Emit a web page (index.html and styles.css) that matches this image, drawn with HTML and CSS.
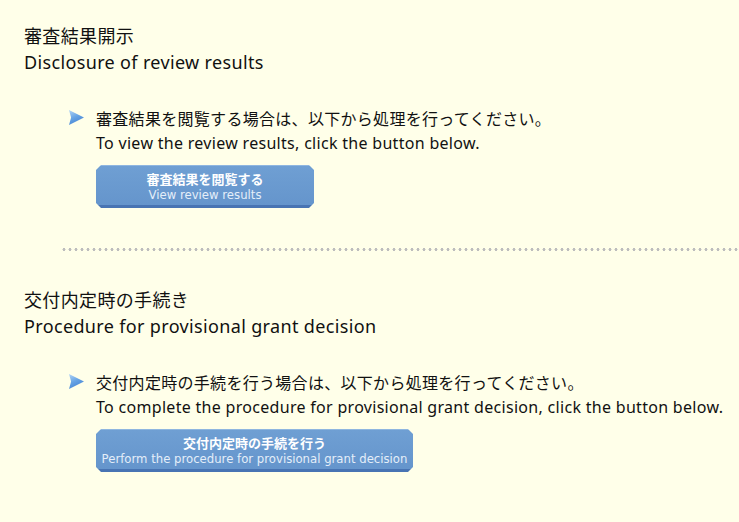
FILE: index.html
```html
<!DOCTYPE html>
<html lang="ja">
<head>
  <meta charset="UTF-8">
  <meta name="viewport" content="width=device-width,initial-scale=1.0">
  <title>審査結果開示</title>
  <link rel="stylesheet" href="styles.css">
</head>
<body>
  <section class="block">
    <h2 class="block-title">審査結果開示<br>Disclosure of review results</h2>
    <div class="guide">
      <p class="guide-text">審査結果を閲覧する場合は、以下から処理を行ってください。<br>To view the review results, click the button below.</p>
      <a class="btn btn-view" href="#">
        <span class="btn-ja">審査結果を閲覧する</span>
        <span class="btn-en">View review results</span>
      </a>
    </div>
  </section>

  <hr class="dots">

  <section class="block">
    <h2 class="block-title">交付内定時の手続き<br>Procedure for provisional grant decision</h2>
    <div class="guide">
      <p class="guide-text">交付内定時の手続を行う場合は、以下から処理を行ってください。<br>To complete the procedure for provisional grant decision, click the button below.</p>
      <a class="btn btn-grant" href="#">
        <span class="btn-ja">交付内定時の手続を行う</span>
        <span class="btn-en">Perform the procedure for provisional grant decision</span>
      </a>
    </div>
  </section>
</body>
</html>
```

FILE: styles.css
```css
body {
  margin: 0;
  background: #ffffe9;
  color: #111;
  font-family: "Noto Sans", "Noto Sans CJK JP", sans-serif;
}

.block {
  padding: 23px 0 0 24px;
}

.block-title {
  margin: 0;
  font-size: 18px;
  font-weight: normal;
  line-height: 26px;
  letter-spacing: 0.35px;
}

.guide {
  position: relative;
  margin: 32px 0 0 72px;
}

.guide::before {
  content: "";
  position: absolute;
  left: -27px;
  top: 3px;
  width: 15px;
  height: 15px;
  background: linear-gradient(155deg, #b4d6f6 0%, #66a3e4 45%, #3a78cc 100%);
  clip-path: polygon(0 0, 100% 50%, 0 100%, 14% 50%);
}

.guide-text {
  margin: 0;
  font-size: 16px;
  line-height: 24px;
  letter-spacing: 0.3px;
}

.btn {
  display: flex;
  flex-direction: column;
  align-items: center;
  justify-content: center;
  box-sizing: border-box;
  height: 43px;
  margin-top: 10px;
  padding-top: 2px;
  background: linear-gradient(#6f9fd3, #6595cc);
  border-top: 1px solid #8fb6e0;
  border-bottom: 3px solid #4874b3;
  clip-path: polygon(5px 0, calc(100% - 5px) 0, 100% 5px, 100% calc(100% - 5px), calc(100% - 5px) 100%, 5px 100%, 0 calc(100% - 5px), 0 5px);
  text-decoration: none;
  color: #fff;
  line-height: 16px;
}

.btn-view { width: 218px; }
.btn-grant { width: 317px; }

.btn-ja {
  font-size: 13px;
  font-weight: bold;
}

.btn-en {
  color: #e4eef9;
  font-family: "DejaVu Sans", sans-serif;
  font-size: 11.7px;
}

.dots {
  margin: 40px 0 13px 61px;
  height: 3px;
  border: 0;
  background: radial-gradient(circle, #bdbdbd 1.4px, transparent 1.6px) 0 0 / 6px 3px repeat-x;
}
```
